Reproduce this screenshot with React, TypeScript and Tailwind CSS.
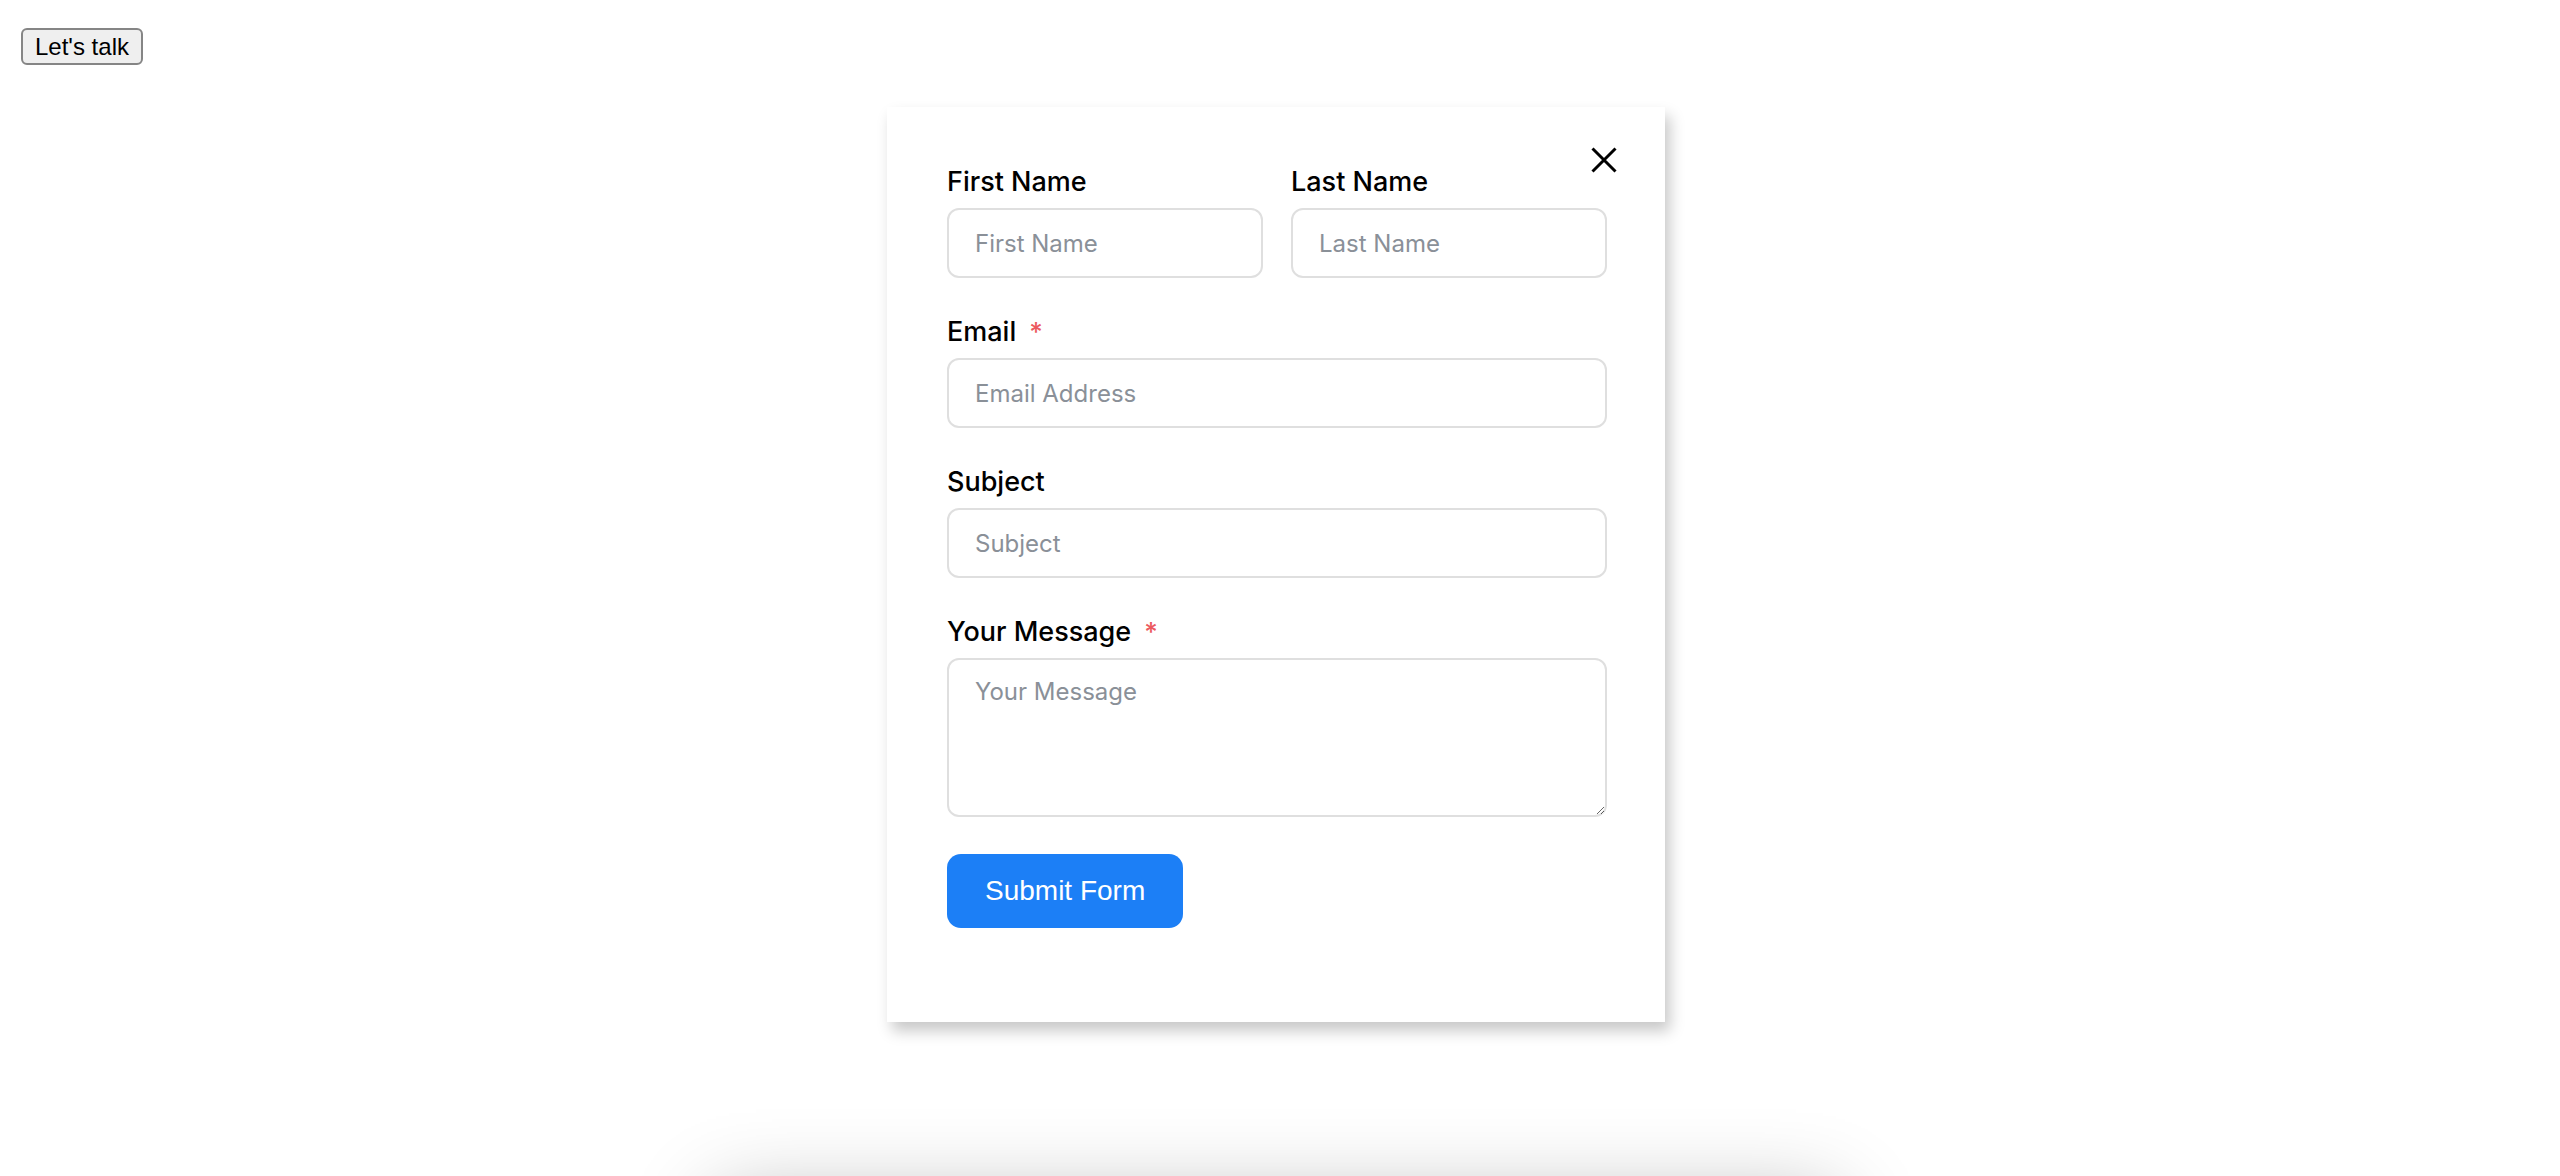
import { useState } from "react";

const labelCls = "block mb-[9px] text-[27px] leading-[34px] font-medium text-black";
const inputCls =
  "block w-full h-[70px] rounded-[12px] border-2 border-[#dfdfdf] bg-white px-[26px] text-[24px] text-gray-900 outline-none placeholder:text-[#8a9098]";

const Star = () => <span className="ml-[13px] text-[26px] text-[#ec5a5f] align-top">*</span>;

const App = () => {
  const [open, setOpen] = useState(true);

  return (
    <div className="h-screen overflow-hidden bg-white pt-[28px] font-['Inter',sans-serif]">
      <button
        onClick={() => setOpen(true)}
        className="ml-[21px] h-[37px] rounded-[6px] border-2 border-[#858585] bg-[#efefef] px-[12px] font-['Liberation_Sans',Arial,sans-serif] text-[24px] leading-none text-black"
      >
        Let's talk
      </button>

      <div className="pr-[8px]">
        {open && (
          <div className="relative mx-auto mt-[42px] w-[778px] bg-white pl-[60px] pr-[58px] pt-[58px] pb-[94px] shadow-[5px_9px_14px_rgba(0,0,0,0.22)]">
            {/* close */}
            <button onClick={() => setOpen(false)} className="absolute top-[40px] right-[48px]">
              <svg width="26" height="26" viewBox="0 0 26 26" fill="none" stroke="#000" strokeWidth="3">
                <path d="M1.5 1.5 24.5 24.5M24.5 1.5 1.5 24.5" />
              </svg>
            </button>

            <form onSubmit={(e) => e.preventDefault()}>
              <div className="mb-[37px] grid grid-cols-2 gap-x-[28px]">
                <div>
                  <label className={labelCls}>First Name</label>
                  <input className={inputCls} placeholder="First Name" />
                </div>
                <div>
                  <label className={labelCls}>Last Name</label>
                  <input className={inputCls} placeholder="Last Name" />
                </div>
              </div>

              <div className="mb-[37px]">
                <label className={labelCls}>
                  Email
                  <Star />
                </label>
                <input className={inputCls} placeholder="Email Address" />
              </div>

              <div className="mb-[37px]">
                <label className={labelCls}>Subject</label>
                <input className={inputCls} placeholder="Subject" />
              </div>

              <div className="mb-[37px]">
                <label className={labelCls}>
                  Your Message
                  <Star />
                </label>
                <textarea
                  className="block h-[159px] w-full rounded-[12px] border-2 border-[#dfdfdf] bg-white px-[26px] pt-[17px] text-[24px] leading-[29px] text-gray-900 outline-none placeholder:text-[#8a9098]"
                  placeholder="Your Message"
                />
              </div>

              <button
                type="submit"
                className="h-[74px] rounded-[14px] bg-[#1c7ff6] px-[38px] font-['Liberation_Sans',Arial,sans-serif] text-[28px] text-white"
              >
                Submit Form
              </button>
            </form>
          </div>
        )}

        {/* panel below the fold, only its shadow shows */}
        <div className="mx-auto mt-[178px] h-[300px] w-[1120px] bg-white shadow-[0_0_80px_rgba(0,0,0,0.3)]" />
      </div>
    </div>
  );
};

export default App;
